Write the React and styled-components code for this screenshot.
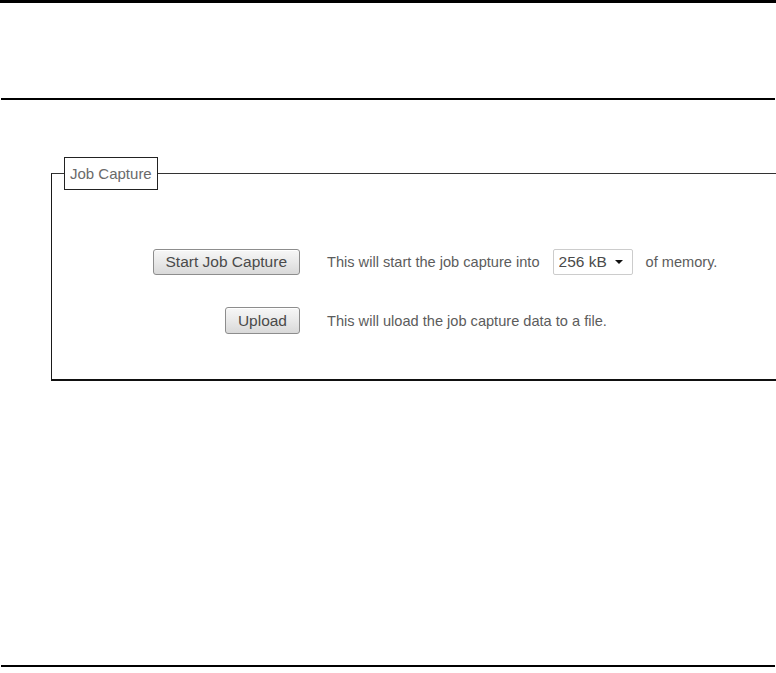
import React from 'react';
import styled, { createGlobalStyle } from 'styled-components';

const GlobalStyle = createGlobalStyle`
  html, body {
    margin: 0;
    padding: 0;
    background: #fff;
    overflow-x: hidden;
  }
  body {
    font-family: "Liberation Sans", Arial, sans-serif;
    color: #5c5c5c;
  }
`;

const Page = styled.div`
  width: 776px;
  height: 673px;
  display: flex;
  flex-direction: column;
  border-top: 3px solid #000;
  box-sizing: border-box;
  overflow: hidden;
`;

const Header = styled.header`
  height: 95px;
  margin: 0 1px;
  border-bottom: 2px solid #000;
  flex-shrink: 0;
`;

const Main = styled.main`
  height: 565px;
  flex-shrink: 0;
  padding: 57px 0 0 51px;
  box-sizing: border-box;
`;

const Footer = styled.footer`
  margin: 0 1px;
  border-top: 2px solid #000;
  flex: 1;
`;

const Fieldset = styled.fieldset`
  width: 800px;
  margin: 0;
  padding: 57px 0 45px;
  border: 1px solid #333;
  border-left-color: #1a1a1a;
  border-bottom: 2px solid #111;
  box-sizing: border-box;
`;

const Legend = styled.legend`
  margin-left: 12px;
  padding: 7px 5px 7px;
  border: 1px solid #222;
  background: #fff;
  font-size: 15px;
  line-height: 17px;
  color: #6a6a6a;
`;

const Form = styled.div`
  display: grid;
  grid-template-columns: 248px auto;
  column-gap: 27px;
  row-gap: 31px;
  align-items: center;
`;

const Action = styled.div`
  display: flex;
  justify-content: flex-end;
  align-items: center;
  height: ${({ $h }) => $h}px;
`;

const Button = styled.button`
  height: ${({ $h }) => $h}px;
  padding: 0 12px;
  border: 1px solid #8d8d8d;
  border-radius: 3px;
  background: linear-gradient(#f7f7f7, #e9e9e9 50%, #d9d9d9);
  box-shadow: inset 0 1px 0 #fff;
  font-family: "Liberation Sans", Arial, sans-serif;
  font-size: 15.5px;
  color: #4a4a4a;
  cursor: pointer;
`;

const Description = styled.div`
  display: flex;
  align-items: center;
  gap: 13px;
  font-size: 14.6px;
  color: #5c5c5c;
  white-space: nowrap;
`;

const SelectWrap = styled.div`
  position: relative;
  width: 80px;
  height: 26px;
`;

const Select = styled.select`
  appearance: none;
  width: 100%;
  height: 100%;
  padding: 0 0 0 5px;
  border: 1px solid #ccc;
  border-radius: 2px;
  background: #fff;
  font-family: "Liberation Sans", Arial, sans-serif;
  font-size: 15.5px;
  color: #4a4a4a;
  box-sizing: border-box;
`;

const Caret = styled.span`
  position: absolute;
  right: 10px;
  top: 11px;
  width: 0;
  height: 0;
  border-left: 4px solid transparent;
  border-right: 4px solid transparent;
  border-top: 4px solid #111;
  pointer-events: none;
`;

export default function App() {
  return (
    <>
      <GlobalStyle />
      <Page>
        <Header />
        <Main>
          <Fieldset>
            <Legend>Job Capture</Legend>
            <Form>
              <Action $h={29}>
                <Button $h={26}>Start Job Capture</Button>
              </Action>
              <Description>
                <span>This will start the job capture into</span>
                <SelectWrap>
                  <Select defaultValue="256">
                    <option value="256">256 kB</option>
                    <option value="512">512 kB</option>
                    <option value="1024">1 MB</option>
                  </Select>
                  <Caret />
                </SelectWrap>
                <span>of memory.</span>
              </Description>
              <Action $h={27}>
                <Button $h={27}>Upload</Button>
              </Action>
              <Description>
                <span>This will uload the job capture data to a file.</span>
              </Description>
            </Form>
          </Fieldset>
        </Main>
        <Footer />
      </Page>
    </>
  );
}
